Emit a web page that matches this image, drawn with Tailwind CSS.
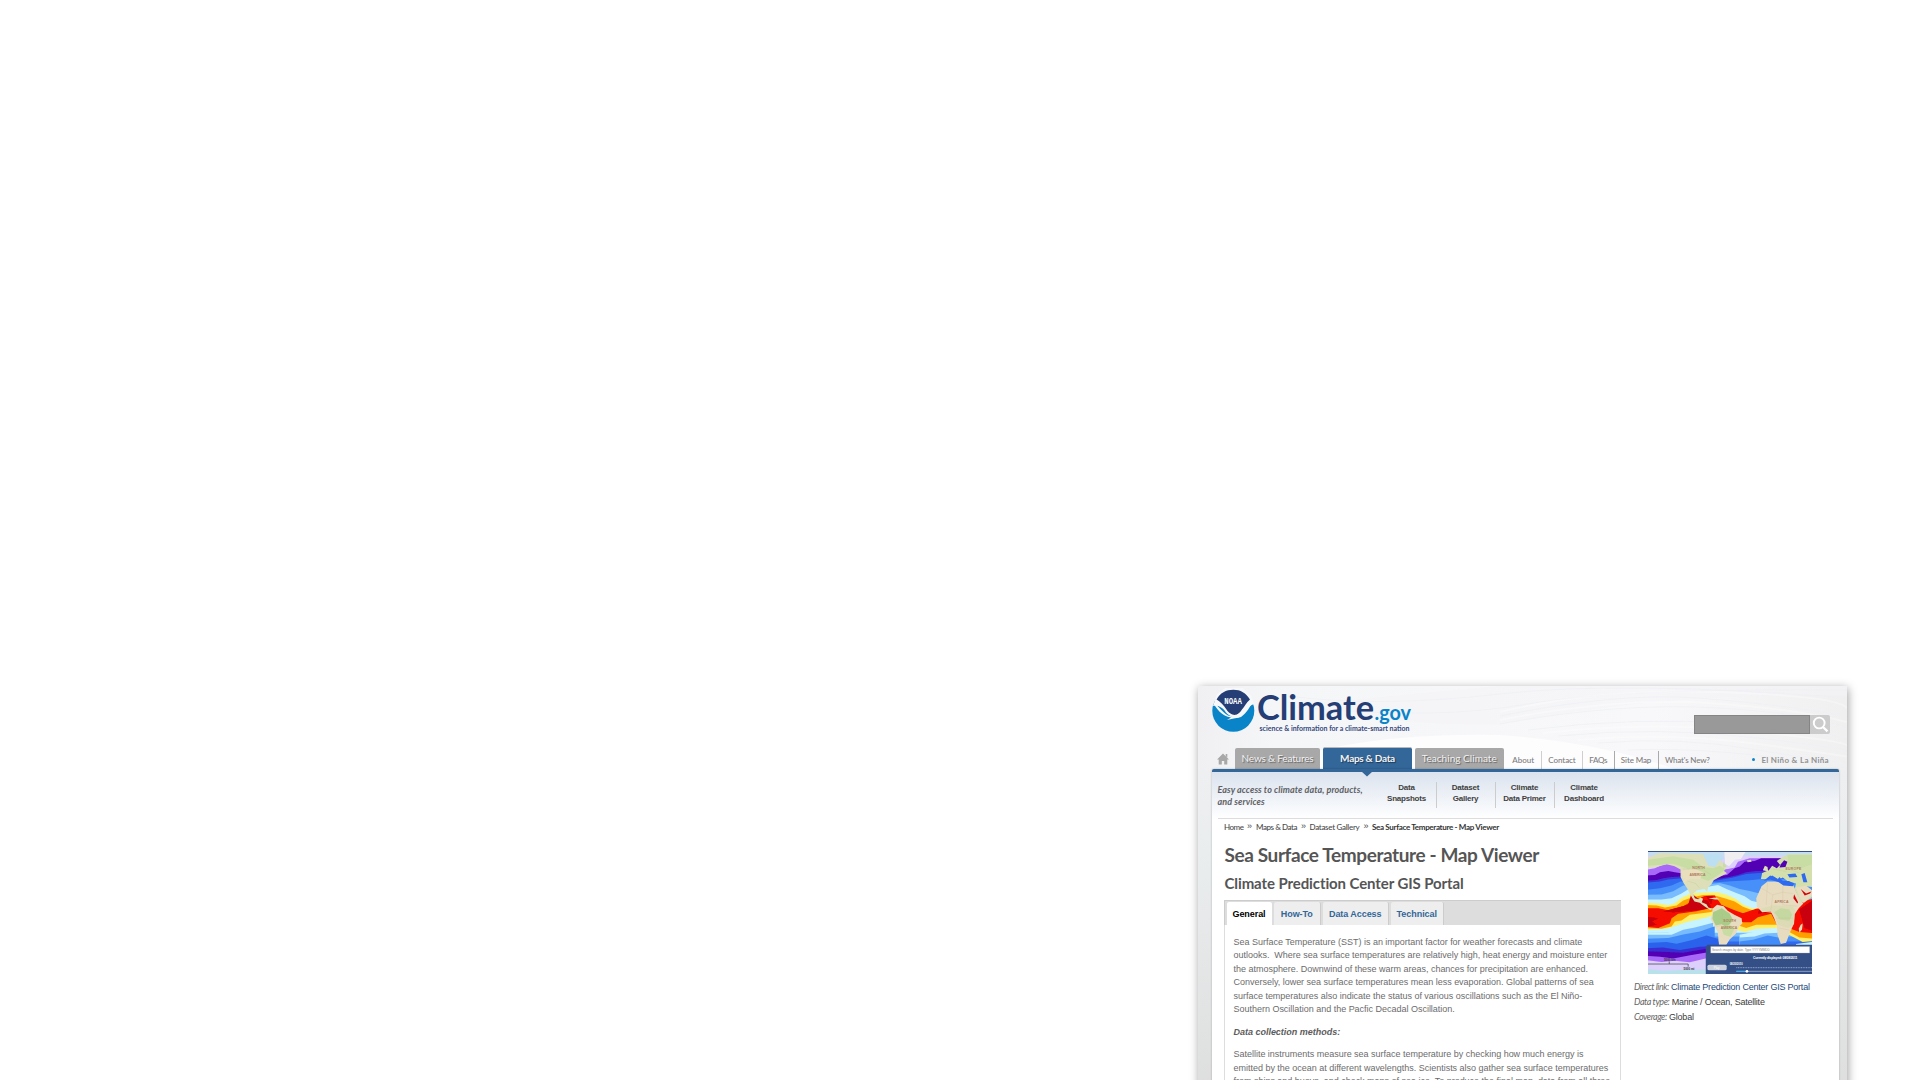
<!DOCTYPE html>
<html lang="en">
<head>
<meta charset="utf-8">
<title>Sea Surface Temperature - Map Viewer</title>
<script src="https://cdn.jsdelivr.net/npm/@tailwindcss/browser@4"></script>
</head>
<body class="h-[1080px] overflow-hidden bg-white pt-[686px] pl-[1198px] font-['Lato',sans-serif]">
<div class="relative flex h-[420px] w-[649px] flex-col bg-linear-to-b from-[#f1f1f3] via-[#eaedee] via-[40%] to-[#dddddd] shadow-[1px_2px_9px_rgba(0,0,0,0.38)]">
  <!-- background waves -->
  <svg class="absolute top-0 left-0" width="649" height="134" viewBox="0 0 649 134" fill="none">
    <defs>
      <linearGradient id="hd" x1="0" x2="1"><stop offset="0" stop-color="#f0f0f2"/><stop offset=".12" stop-color="#f5f6f7"/><stop offset=".7" stop-color="#f8f8fa"/><stop offset="1" stop-color="#f0f0f1"/></linearGradient>
    </defs>
    <path fill="url(#hd)" d="M0 0H649V84H0z"/>
    <path fill="#f3f4f7" d="M302 0H649V10Q480 4 302 38Q200 40 90 20z" opacity=".5"/>
    <path fill="#fdfdfe" d="M60 84Q150 46 302 49Q400 56 480 84z"/>
    <g stroke="#eef0f4" stroke-width="1" opacity=".7">
      <path d="M90 10Q180 22 302 8T649 12M110 22Q240 34 330 18T649 4M302 30Q420 6 500 12T649 30M302 38Q420 16 520 22T649 42M330 44Q440 30 540 38T649 54M360 50Q460 40 560 52T649 66M400 57Q480 50 560 64T649 76M430 64Q520 60 649 82"/>
    </g>
    <g stroke="#fff" stroke-width="2" opacity=".3">
      <path d="M302 34Q420 11 510 17T649 36M302 26Q400 2 520 6T649 22M345 47Q450 35 550 45T649 60M380 54Q470 46 560 58T649 71"/>
    </g>
  </svg>

  <header class="relative flex h-[62px] shrink-0 items-start justify-between pr-[17px] pl-[14px]">
    <svg class="mt-[3px] overflow-visible" width="202" height="46" viewBox="1212 689 202 46">
      <circle cx="1233.3" cy="710.8" r="21" fill="#0a84c9"/>
      <path fill="#f7f8fa" d="M1213 706L1217 694L1225 688H1243L1251 695L1254 704C1246 707 1243 714 1239 717C1235 720 1226 714 1225 711C1222 707 1218 705 1213 706z"/>
      <path fill="#253e75" d="M1216.6 699.5C1220 693 1226 689.8 1233.3 689.8S1246 693 1250 699.5C1246 703 1245 706 1242 709.5C1240 713 1237 715 1235.5 714.8C1233 715.5 1228 712.5 1226.5 709.5C1223.5 705 1220 701.5 1216.6 699.5z"/>
      <path fill="#f7f8fa" d="M1212.5 702C1217 704 1222 712 1228 715.5C1232 717 1235 716 1238 714C1244 710 1247 704.5 1253.5 701C1250 706 1247 713 1241 717C1238 718.3 1233 718.3 1227 720L1231 717.5C1222 716.5 1216 708 1212.5 702z"/>
      <text x="1224.3" y="704" font-family="Liberation Mono, monospace" font-weight="700" font-size="8.5" fill="#fff" textLength="17.6" lengthAdjust="spacingAndGlyphs">NOAA</text>
      <text x="1257" y="719.5" font-family="Lato, sans-serif" font-weight="700" font-size="33.5" fill="#253e75" textLength="117" lengthAdjust="spacingAndGlyphs">Climate</text>
      <text x="1374.5" y="719.5" font-family="Lato, sans-serif" font-weight="700" font-size="21" fill="#0a84c9" textLength="36.5" lengthAdjust="spacingAndGlyphs">.gov</text>
      <text x="1259.5" y="730.5" font-family="Lato, sans-serif" font-weight="700" font-size="7.8" fill="#35487d" textLength="150" lengthAdjust="spacingAndGlyphs">science &amp; information for a climate-smart nation</text>
    </svg>
    <div class="mt-[29px] flex h-[19px]">
      <div class="w-[116px] border border-[#858585] bg-[#999999]"></div>
      <div class="flex w-5 items-center justify-center rounded-r-[2px] bg-[#cccccc]">
        <svg width="17" height="17" viewBox="0 0 17 17" fill="none" stroke="#fff"><circle cx="7.2" cy="7" r="5.4" stroke-width="1.9"/><path stroke-width="2.3" d="M11 11L15.5 15.3"/></svg>
      </div>
    </div>
  </header>

  <nav class="relative flex h-[21px] shrink-0 items-end pl-[14px] text-[10px] text-[#f2f2f2]">
    <svg class="mr-[6px] mb-[4px] ml-[5px]" width="12" height="12" viewBox="0 0 12 12" fill="#a8a8a8"><path d="M6 .5L12 6.5H10.3V11.5H7.2V8H4.8V11.5H1.7V6.5H0L6 .5zM8.7 1H10.3V4.5L8.7 3z"/></svg>
    <div class="flex h-[21px] w-[85px] items-center justify-center rounded-t-[2px] bg-[#a8a8a8] tracking-[-0.19px] text-shadow-[1px_1px_1px_rgba(0,0,0,0.45)]">News &amp; Features</div>
    <div class="ml-[3px] flex h-[22px] w-[89px] items-center justify-center rounded-t-[2px] border-t border-[#b8b8b8] bg-[#336699] font-bold tracking-[-0.28px] text-shadow-[1px_1px_1px_rgba(0,0,0,0.45)]">Maps &amp; Data</div>
    <div class="ml-[3px] flex h-[21px] w-[88.5px] items-center justify-center rounded-t-[2px] bg-[#a8a8a8] tracking-[0.04px] text-shadow-[1px_1px_1px_rgba(0,0,0,0.45)]">Teaching Climate</div>
    <div class="ml-[2px] flex h-[18px] text-[8px] font-medium text-[#7c7c7c]">
      <div class="flex w-[36.5px] items-center justify-center border-r border-[#cfcfcf]">About</div>
      <div class="flex w-[41px] items-center justify-center border-r border-[#cfcfcf] tracking-[-0.07px]">Contact</div>
      <div class="flex w-[31.5px] items-center justify-center border-r border-[#aaaaaa] tracking-[-0.35px]">FAQs</div>
      <div class="flex w-[44px] items-center justify-center border-r border-[#aaaaaa] tracking-[-0.12px]">Site Map</div>
      <div class="flex items-center pl-[6.5px] tracking-[-0.19px]">What's New?</div>
    </div>
    <div class="mr-[18px] ml-auto flex h-[19px] items-center gap-[6px] text-[8px] font-bold tracking-[0.31px] text-[#929292]"><span class="size-[3px] rounded-full bg-[#0a84c9]"></span>El Niño &amp; La Niña</div>
  </nav>

  <main class="relative mr-[8px] ml-[13.5px] flex min-h-0 flex-1 flex-col rounded-t-[2px] border-t-[3px] border-[#336699] bg-white shadow-[0_0_2px_rgba(0,0,0,0.3)]">
    <svg class="absolute -top-px left-[149.5px]" width="12" height="6" viewBox="0 0 12 6" fill="#336699"><path d="M0 0H12L6 5.5z"/></svg>
    <section class="flex h-[47px] shrink-0 bg-linear-to-b from-[#dbe3ee] to-white px-[6px]">
      <div class="flex w-full border-b border-[#dddddd]">
        <p class="w-[160px] shrink-0 pt-[12px] text-[9px] leading-[11.7px] font-bold tracking-[0.08px] text-[#5e6165] italic">Easy access to climate data, products,<br>and services</p>
        <div class="mt-[10px] flex h-[26px] text-center font-['Liberation_Sans',sans-serif] text-[8px] leading-[11px] font-bold tracking-[-0.22px] text-[#3f3f3f]">
          <div class="w-[59px] border-r border-[#cccccc]">Data<br>Snapshots</div>
          <div class="w-[59px] border-r border-[#cccccc]">Dataset<br>Gallery</div>
          <div class="w-[59px] border-r border-[#cccccc]">Climate<br>Data Primer</div>
          <div class="w-[59px]">Climate<br>Dashboard</div>
        </div>
      </div>
    </section>

    <div class="flex pl-[12.5px]">
      <article class="w-[397px] shrink-0">
        <div class="flex h-[16px] items-center text-[8px] font-medium text-[#4a4a4a]">
          <span class="w-[23px] tracking-[-0.5px]">Home</span><span class="w-[9px] font-['Liberation_Sans',sans-serif] text-[9px]">»</span>
          <span class="w-[45px] tracking-[-0.44px]">Maps &amp; Data</span><span class="w-[8.5px] font-['Liberation_Sans',sans-serif] text-[9px]">»</span>
          <span class="w-[54px] tracking-[-0.3px]">Dataset Gallery</span><span class="w-[8.5px] font-['Liberation_Sans',sans-serif] text-[9px]">»</span>
          <span class="font-bold tracking-[-0.32px] whitespace-nowrap text-[#333333]">Sea Surface Temperature - Map Viewer</span>
        </div>
        <h1 class="mt-[7px] pl-[0.5px] text-[19px] leading-[26px] font-bold tracking-[-0.39px] whitespace-nowrap text-[#555555]">Sea Surface Temperature - Map Viewer</h1>
        <h2 class="mt-[5px] pl-[0.5px] text-[15px] leading-[20px] font-bold tracking-[-0.1px] whitespace-nowrap text-[#555555]">Climate Prediction Center GIS Portal</h2>
        <div class="mt-[7px] flex h-[25px] items-end gap-[2.5px] border-t border-l border-[#cccccc] bg-[#dddddd] pl-[1.5px] font-['Liberation_Sans',sans-serif] text-[9px] font-bold tracking-[-0.06px] text-[#336699]">
          <div class="flex h-[23px] w-[45px] items-center justify-center rounded-t-[2px] bg-white pt-[2px] text-black">General</div>
          <div class="flex h-[23px] w-[46.5px] items-center justify-center rounded-t-[2px] border-r border-[#cccccc] bg-[#eeeeee] pt-[2px]">How-To</div>
          <div class="flex h-[23px] w-[65.5px] items-center justify-center rounded-t-[2px] border-r border-[#cccccc] bg-[#eeeeee] pt-[2px]">Data Access</div>
          <div class="flex h-[23px] w-[52.5px] items-center justify-center rounded-t-[2px] border-r border-[#cccccc] bg-[#eeeeee] pt-[2px]">Technical</div>
        </div>
        <div class="h-[180px] border-r border-l border-[#dddddd] pt-[11px] pl-[8.5px] font-['Liberation_Sans',sans-serif] text-[9px] leading-[13.43px] tracking-[-0.015px] whitespace-nowrap text-[#6c6c6c]">
          <p>Sea Surface Temperature (SST) is an important factor for weather forecasts and climate<br>outlooks.&nbsp; Where sea surface temperatures are relatively high, heat energy and moisture enter<br>the atmosphere. Downwind of these warm areas, chances for precipitation are enhanced.<br>Conversely, lower sea surface temperatures mean less evaporation. Global patterns of sea<br>surface temperatures also indicate the status of various oscillations such as the El Niño-<br>Southern Oscillation and the Pacfic Decadal Oscillation.</p>
          <p class="mt-[9px] font-bold text-[#5c5c5c] italic">Data collection methods:</p>
          <p class="mt-[9px]">Satellite instruments measure sea surface temperature by checking how much energy is<br>emitted by the ocean at different wavelengths. Scientists also gather sea surface temperatures<br>from ships and buoys, and check maps of sea ice. To produce the final map, data from all three</p>
        </div>
      </article>

      <aside class="pt-[32px] pl-[13px]">
        <svg class="ml-[14px]" width="164" height="123" viewBox="24 18 494 370" preserveAspectRatio="none">
          <defs><filter id="soft" filterUnits="userSpaceOnUse" x="14" y="8" width="514" height="390"><feGaussianBlur stdDeviation="2.2"/></filter></defs>
          <path fill="#ddd0fc" d="M24 18H518V388H24z"/>
          <path fill="#c5ddf0" d="M24 18H518V32H24z"/>
          <!-- temperature bands, north to south -->
          <g filter="url(#soft)">
            <path fill="#a868f8" d="M10 76L45 70L60 62L90 54L110 60L124 70L210 102L232 75L265 72L285 68L295 50L330 40H530V350H10z"/>
            <path fill="#5200b4" d="M10 92L45 90L60 82L85 78L105 82L124 85L210 102L225 94L262 90L285 70L300 65L315 50L345 48L365 40H530V345H10z"/>
            <path fill="#3a35d8" d="M10 108L50 105L70 100L95 96L125 95L215 105L265 97L295 90L320 82L350 78L530 80V335H10z"/>
            <path fill="#2f69f0" d="M10 114L60 110L85 104L120 101L215 110L280 98L320 87L360 84L530 84V318H10z"/>
            <path fill="#4790fa" d="M10 136L60 130L95 122L122 110L230 112L290 108L330 106L370 102H530V290H10z"/>
            <path fill="#78bbff" d="M10 150L65 149L100 139L130 122L205 118L240 114L270 122L300 132L330 138L360 146H530V275H10z"/>
            <path fill="#c8f4ff" d="M10 164L65 164L95 160L125 146L150 130L200 126L235 120L262 133L290 144L315 154L335 168L360 174H530V264H10z"/>
            <path fill="#fff069" d="M10 173L60 176L85 181L105 175L125 159L155 145L195 143L235 142L265 151L290 163L310 179L340 191L360 187H530V288L490 292L410 250L350 252L315 262L290 255L235 207L200 218L145 230L110 242L80 252L10 256z"/>
            <path fill="#ffa000" d="M10 180L50 182L75 188L110 182L130 167L155 158L190 150L220 150L255 160L285 170L310 186L340 197L530 188V282L480 278L410 240L350 240L320 250L285 238L235 195L210 202L150 210L125 227L105 230L95 245L65 252L10 250z"/>
            <path fill="#f40800" d="M10 190L55 190L85 196L130 184L155 170L195 153L225 152L245 180L270 190L285 196L310 205L350 192L400 185L530 160V266L480 262L410 235L395 207L355 217L335 232L310 232L290 220L250 190L210 190L170 199L115 207L95 220L90 235L55 250L10 245z"/>
            <path fill="#c90008" d="M70 200L105 190L145 180L155 145L175 162L205 168L215 190L170 196L100 202zM10 215L55 220L35 230L50 240L10 247zM200 154L220 155L214 178zM360 192L405 187V200L355 206zM480 194L530 160V260L496 250z"/>
            <path fill="#c8f4ff" d="M10 262L85 264L115 246L150 238L218 216V400H10zM300 270L330 264L370 257L414 252V398H300zM470 298L530 290V398H470z"/>
            <path fill="#78bbff" d="M10 270L95 270L130 255L165 248L220 234V398H10zM300 278L345 275L375 266L418 264V398H300zM464 306L530 302V398H464z"/>
            <path fill="#438cfa" d="M10 282L85 280L130 269L180 260L225 244V398H10zM300 290L340 285L385 272L424 280V398H300zM456 310H530V398H456z"/>
            <path fill="#2c62eb" d="M10 295L80 292L110 297L160 285L200 272L235 282V398H10z"/>
            <path fill="#392ed2" d="M10 311L70 308L120 316L180 306L240 304V398H10z"/>
            <path fill="#5200b4" d="M10 319L80 322L130 324L195 313L240 311V398H10z"/>
            <path fill="#a868f8" d="M10 333L60 336L100 341L155 331L210 322V398H10z"/>
            <path fill="#ddd0fc" d="M10 345L65 352L105 348L150 353L210 338V398H10z"/>
            <path fill="#b9e1ec" d="M10 372L70 378L120 376L210 374V398H10z"/>
          </g>
          <!-- land -->
          <path fill="#dcdfb8" d="M24 38L60 24L130 26L200 28L240 40L250 58L262 70L250 76L262 85L240 96L222 106L215 118L205 128L202 140L194 132L172 136L160 146L165 160L175 163L182 158L190 162L186 172L200 178L206 188L218 192L212 196L196 186L180 174L164 170L152 150L142 130L132 116L122 96L122 74L104 64L80 58L50 66L24 70z"/>
          <path fill="#c7dda4" d="M24 44L100 34L160 44L190 66L220 70L240 62L258 74L230 94L205 108L160 90L140 70L100 56L24 62zM250 50L262 65L250 68z"/>
          <path fill="#e9dfbf" d="M124 78L160 70L190 82L180 104L150 102L134 112z"/>
          <path fill="#bcdff2" d="M190 26L235 28L258 40L238 48L226 66L206 62L198 46z"/>
          <path fill="#f1eef0" d="M254 20H318L304 42L286 44L268 64L256 56z"/>
          <path fill="#e7dcc0" d="M218 192L232 180L252 184L264 198L284 210L306 220L308 236L298 246L288 268L270 284L260 300L238 300L234 262L222 240L212 222L218 206z"/>
          <path fill="#a9cd88" d="M220 202L246 190L270 206L280 226L262 248L246 238L228 242L218 222z"/>
          <path fill="#c7dda4" d="M244 246L270 240L286 250L272 276L252 270z"/>
          <path fill="#e7dcc0" d="M366 124L384 110L418 110L430 118L462 122L476 152L492 176L478 190L466 208L464 236L452 262L440 294L424 298L414 270L412 242L404 220L394 200L368 202L352 186L350 160z"/>
          <path fill="#b5d494" d="M404 202L424 190L450 194L458 210L450 228L420 224L412 212z"/>
          <path fill="#d4dbac" d="M364 192L400 182L460 184L468 200L462 240L446 250L416 240L404 206L370 200z" opacity=".55"/>
          <path fill="#d3e0ae" d="M364 102L368 84L388 76L398 62L412 70L422 60L412 48L430 36L448 28L518 28V126L500 124L482 140L518 144V156L494 174L484 170L472 146L466 132L470 116L444 108L430 98L418 104L398 92L382 102z"/>
          <path fill="#c7dda4" d="M444 30H518V58L478 72L448 60z"/>
          <path fill="#5200b4" d="M424 58L434 46L444 50L438 66L420 68z"/>
          <path fill="#2f69f0" d="M372 108L392 92L402 96L414 104L420 96L430 108L448 108L464 116L460 124L432 122L418 112L392 104zM444 88L468 86L474 96L450 98zM486 88L496 84L504 112L492 112z"/>
          <path fill="#e7dcc0" d="M470 128L500 122L518 136V150L492 174L480 156z"/>
          <path fill="#d40008" d="M464 148L476 172L474 176L462 160zM484 132L500 146L516 140L512 146L496 152z"/>
          <path fill="#dcdfb8" d="M370 76L376 62L384 66L386 80zM322 46L334 44L336 50L324 52zM484 240L490 236L488 254L480 264L478 252zM206 160L230 158L240 164L226 164z"/>
          <g stroke="#c4ab8b" stroke-width="1" fill="none" opacity=".55"><path d="M128 72L190 74L214 90M142 108L168 116L180 130M224 198L244 218L266 246M246 190L250 240L230 246M366 130L400 150L430 142L460 146M384 112L380 180M430 120L430 180L474 184M400 150L394 196M410 220H460M420 250L450 256M440 70L480 84M400 72L440 80"/></g>
          <g fill="#ad795b" font-family="Liberation Sans, sans-serif" font-weight="700" font-size="10.5"><text x="157" y="72" textLength="38">NORTH</text><text x="149" y="93" textLength="48">AMERICA</text><text x="438" y="74" textLength="48">EUROPE</text><text x="405" y="175" textLength="42">AFRICA</text><text x="251" y="231" textLength="38">SOUTH</text><text x="243" y="252" textLength="50">AMERICA</text></g>
          <path fill="#334f86" d="M24 18H518V21H24zM203 300H518V388H198V306z"/>
          <path fill="#fff" stroke="#aaa" d="M213 305H511V325H213z"/>
          <text x="217" y="318" font-family="Liberation Sans, sans-serif" font-size="9.5" fill="#888" textLength="174">Search images by date. Type YYYYMMDD</text>
          <text x="340" y="343" font-family="Liberation Sans, sans-serif" font-size="10" font-weight="700" fill="#fff" textLength="134">Currently displayed: 08/08/2011</text>
          <text x="270" y="362" font-family="Liberation Sans, sans-serif" font-size="8" font-weight="700" fill="#fff" textLength="39">08/20/2010</text>
          <rect x="203" y="360" width="58" height="17" rx="5" fill="#cbd0dc"/><text x="222" y="372" font-family="Liberation Sans, sans-serif" font-size="9" fill="#fff">Play</text>
          <path stroke="#93a8cc" stroke-width="3" stroke-dasharray="3 2" d="M290 369H518"/><path stroke="#b8c6de" stroke-width="2" d="M290 380H518"/><path stroke="#38aef5" stroke-width="3" d="M290 380H322"/><circle cx="322" cy="380" r="4" fill="#fff"/>
          <path stroke="#333" stroke-width="2" fill="none" d="M24 358H145V366M88 350V358"/>
          <g fill="#333" font-family="Liberation Sans, sans-serif" font-weight="700" font-size="9"><text x="72" y="348">5000 km</text><text x="131" y="375">5000 mi</text></g>
        </svg>
        <div class="mt-[6px] font-['Liberation_Sans',sans-serif] text-[9px] leading-[14.8px] tracking-[-0.22px] whitespace-nowrap text-[#3c3c3c]">
          <p><span class="font-['Lato',sans-serif] tracking-[-0.46px] text-[#666666] italic">Direct link:</span> <span class="text-[#1d4878]">Climate Prediction Center GIS Portal</span></p>
          <p><span class="font-['Lato',sans-serif] tracking-[-0.41px] text-[#666666] italic">Data type:</span> Marine / Ocean, Satellite</p>
          <p><span class="font-['Lato',sans-serif] tracking-[-0.45px] text-[#666666] italic">Coverage:</span> Global</p>
        </div>
      </aside>
    </div>
  </main>
</div>
</body>
</html>
